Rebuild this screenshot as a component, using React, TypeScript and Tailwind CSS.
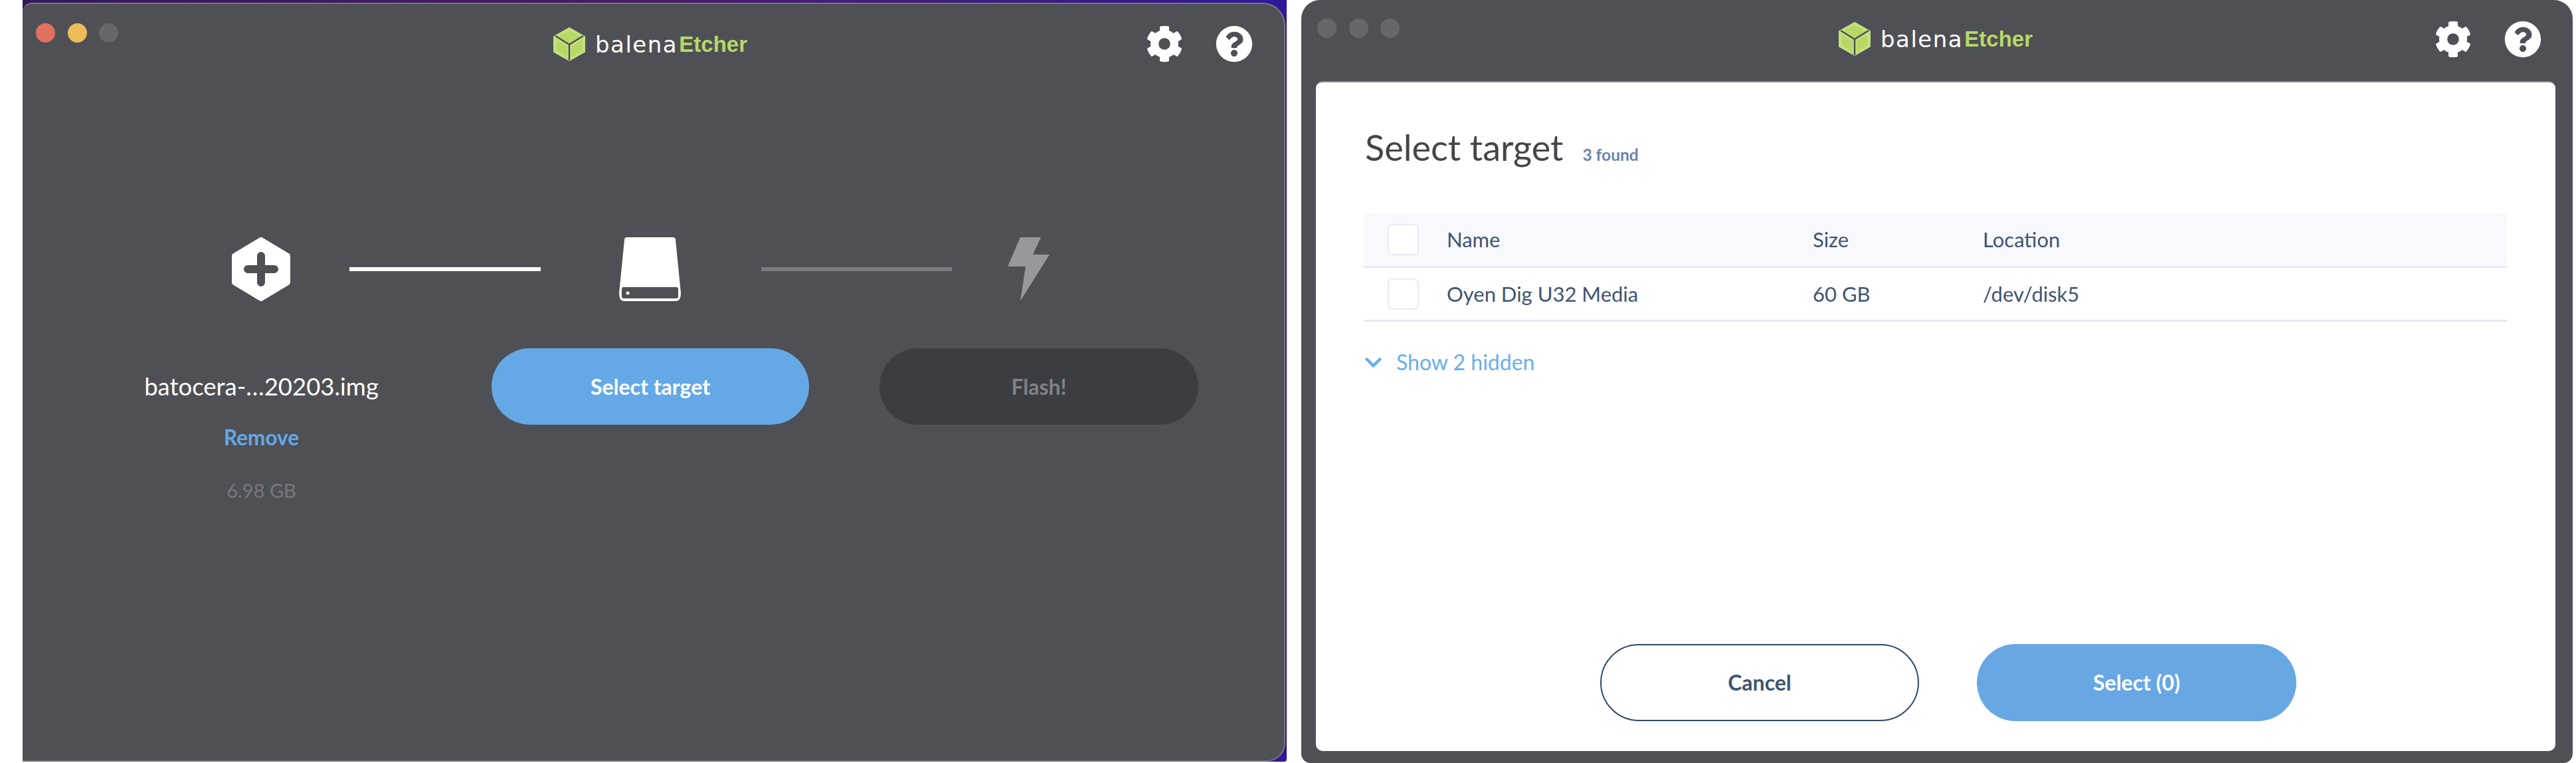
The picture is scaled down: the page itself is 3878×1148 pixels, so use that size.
import { FaChevronDown, FaCog, FaQuestionCircle } from 'react-icons/fa';

const LOGO_FONT = "font-['DejaVu_Sans',sans-serif]";

function Logo() {
  return (
    <div className="flex w-[292px] items-center">
      <svg width="48" height="51" viewBox="0 0 48 51" className="shrink-0">
        <polygon
          points="24,1 47,14 47,37 24,50 1,37 1,14"
          fill="#c3e07e"
          stroke="#c3e07e"
          strokeWidth="2"
          strokeLinejoin="round"
        />
        <polygon points="24,5 41,14 24,24 7,14" fill="#b6d965" />
        <polygon points="5,19 21,29 21,45 5,35" fill="#b6d965" />
        <polygon points="43,19 27,29 27,45 43,35" fill="#b6d965" />
        <path d="M3 13 L24 26 L45 13 M24 26 L24 50" fill="none" stroke="#4f5055" strokeWidth="2.5" />
      </svg>
      <span className={`ml-[15px] text-[34px] leading-none tracking-[1.5px] text-white ${LOGO_FONT}`}>balena</span>
      <span className="ml-auto font-['Liberation_Sans',sans-serif] text-[33px] leading-none font-bold text-[#b6d965]">
        Etcher
      </span>
    </div>
  );
}

function TrafficLights({ colors }: { colors: string[] }) {
  return (
    <div className="flex gap-[18.5px]">
      {colors.map((c, i) => (
        <div key={i} className="h-[29px] w-[29px] rounded-full" style={{ backgroundColor: c }} />
      ))}
    </div>
  );
}

function HeaderIcons() {
  return (
    <div className="flex items-center gap-[49px] text-white">
      <FaCog className="h-[56px] w-[56px]" />
      <FaQuestionCircle className="h-[56px] w-[56px]" />
    </div>
  );
}

function ImageStepIcon() {
  return (
    <svg width="88" height="96" viewBox="0 0 88 96" className="shrink-0">
      <polygon
        points="44,4 84,28 84,68 44,92 4,68 4,28"
        fill="#fff"
        stroke="#fff"
        strokeWidth="8"
        strokeLinejoin="round"
      />
      <path d="M44 28 V68 M24 48 H64" stroke="#4f5055" strokeWidth="12" strokeLinecap="round" />
    </svg>
  );
}

function DriveIcon() {
  return (
    <svg width="93" height="96" viewBox="0 0 93 96" className="shrink-0">
      <path
        d="M12 0 H81 Q85 0 85 4 L93 84 Q93 96 86 96 H7 Q0 96 0 84 L8 4 Q8 0 12 0 Z"
        fill="#fff"
      />
      <rect x="4" y="75" width="85" height="17" rx="3" fill="#4f5055" />
      <circle cx="13" cy="84" r="2.5" fill="#fff" />
    </svg>
  );
}

function BoltIcon() {
  return (
    <svg width="63" height="96" viewBox="0 0 63 96" className="shrink-0">
      <polygon points="19,0 50,0 38,26 63,26 19,96 27,44 0,44" fill="#97989c" />
    </svg>
  );
}

function FlashWindow() {
  return (
    <div className="h-[1146px] w-[1903px] shrink-0 rounded-br-[4px] bg-linear-to-r from-[#33175f] via-[#4a1b6b] to-[#30189a] pt-[4px]">
      <div className="h-[1142px] w-[1901px] rounded-tl-[14px] rounded-tr-[34px] rounded-br-[28px] border-t-2 border-r-2 border-b-2 border-[#77787c] bg-[#4f5055] font-['Lato',sans-serif]">
        <div className="flex h-[90px] items-start">
          <div className="ml-[20px] mt-[29px]">
            <TrafficLights colors={['#e2705f', '#edbd5b', '#66676c']} />
          </div>
          <div className="ml-[655px] mt-[35px]">
            <Logo />
          </div>
          <div className="ml-[600px] mt-[32px]">
            <HeaderIcons />
          </div>
        </div>

        <div className="ml-[315px] mt-[261px] flex items-center">
          <ImageStepIcon />
          <div className="ml-[89px] h-[6px] w-[288px] bg-white" />
          <div className="ml-[118px]">
            <DriveIcon />
          </div>
          <div className="ml-[121px] h-[6px] w-[287px] bg-[#7b7c80]" />
          <div className="ml-[84px]">
            <BoltIcon />
          </div>
        </div>

        <div className="mt-[71px] flex items-start">
          <div className="ml-[184px] flex w-[351px] flex-col items-center">
            <div className="mt-[32px] text-[36.5px] leading-[50px] whitespace-nowrap text-white">batocera-…20203.img</div>
            <div className="mt-[27px] text-[31.5px] leading-[50px] font-bold text-[#63a9e6]">Remove</div>
            <div className="mt-[30px] text-[29px] leading-[50px] text-[#76787c]">6.98 GB</div>
          </div>
          <button className="ml-[171px] h-[115px] w-[478px] rounded-full bg-[#65a8e6] text-[32px] font-bold text-white">
            Select target
          </button>
          <button className="ml-[106px] h-[115px] w-[480px] rounded-full bg-[#3c3d42] text-[32px] font-bold text-[#808285]">
            Flash!
          </button>
        </div>
      </div>
    </div>
  );
}

function TargetRow({ name, size, location, header }: { name: string; size: string; location: string; header?: boolean }) {
  return (
    <div
      className={`flex items-center text-[31px] text-[#3f5470] ${
        header ? 'h-[82px] border-b-[3px] border-[#e8e9f3] bg-[#f8f9fd]' : 'h-[81px] border-b-[3px] border-[#e8e9f3]'
      }`}
    >
      <div className="ml-[36px] h-[47px] w-[47px] rounded-[7px] border-2 border-[#e8e9f3] bg-white" />
      <div className="ml-[42px] w-[551px]">{name}</div>
      <div className="w-[256px]">{size}</div>
      <div>{location}</div>
    </div>
  );
}

function TargetWindow() {
  return (
    <div className="h-[1148px] w-[1914px] shrink-0 rounded-t-[28px] rounded-b-[14px] bg-[#4f5055] font-['Lato',sans-serif]">
      <div className="flex h-[122px] items-start">
        <div className="ml-[24px] mt-[28px]">
          <TrafficLights colors={['#66676c', '#66676c', '#66676c']} />
        </div>
        <div className="ml-[661px] mt-[33px]">
          <Logo />
        </div>
        <div className="ml-[605px] mt-[31px]">
          <HeaderIcons />
        </div>
      </div>

      <div className="ml-[22px] flex h-[1008px] w-[1866px] flex-col rounded-[10px] border-t-2 border-[#8b8c90] bg-white pl-[72px] pr-[73px]">
        <div className="ml-[2px] mt-[58px] flex items-baseline">
          <h1 className="text-[54px] leading-[80px] font-normal text-[#45464a]">Select target</h1>
          <span className="ml-[29px] text-[24.5px] font-bold text-[#6a85ac]">3 found</span>
        </div>

        <div className="mt-[59px]">
          <TargetRow header name="Name" size="Size" location="Location" />
          <TargetRow name="Oyen Dig U32 Media" size="60 GB" location="/dev/disk5" />
        </div>

        <div className="mt-[37px] flex items-center text-[32px] text-[#6aaeea]">
          <FaChevronDown className="h-[29px] w-[29px]" />
          <span className="ml-[20px]">Show 2 hidden</span>
        </div>

        <div className="ml-[356px] mt-auto mb-[45px] flex gap-[87px]">
          <button className="h-[116px] w-[480px] rounded-full border-2 border-[#2f4a6d] bg-white text-[32px] font-bold text-[#3f5470]">
            Cancel
          </button>
          <button className="h-[116px] w-[481px] rounded-full bg-[#67a8e4] text-[32px] font-bold text-white">
            Select (0)
          </button>
        </div>
      </div>
    </div>
  );
}

export default function App() {
  return (
    <div className="flex h-[1148px] w-[3878px] overflow-hidden bg-white pl-[34px]">
      <FlashWindow />
      <div className="ml-[22px]">
        <TargetWindow />
      </div>
    </div>
  );
}
